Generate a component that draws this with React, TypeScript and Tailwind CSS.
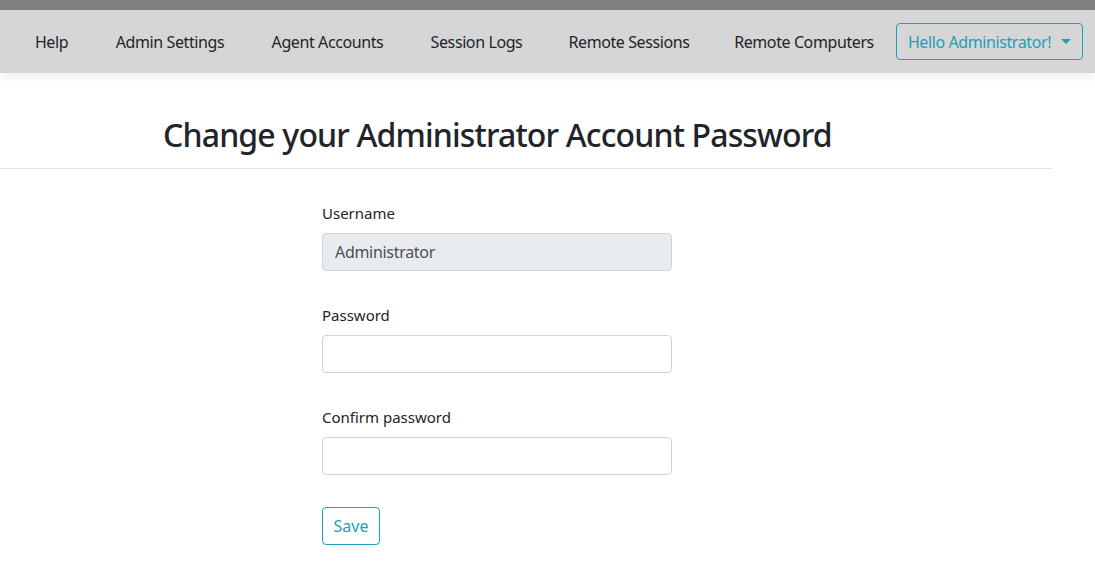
import React from "react";

const navLinks = [
  { name: "Help", w: "w-[81px]" },
  { name: "Admin Settings", w: "w-[156px]" },
  { name: "Agent Accounts", w: "w-[159px]" },
  { name: "Session Logs", w: "w-[139px]" },
  { name: "Remote Sessions", w: "w-[166px]" },
  { name: "Remote Computers", w: "w-[184px]" },
];

const fields = [
  { label: "Username", value: "Administrator", disabled: true },
  { label: "Password", value: "", disabled: false },
  { label: "Confirm password", value: "", disabled: false },
];

const App = () => {
  return (
    <div
      className="min-h-[588px] bg-white text-[#212529]"
      style={{ fontFamily: '"Segoe UI", "Noto Sans", sans-serif' }}
    >
      {/* top strip */}
      <div className="h-[10px] bg-[#808080]" />

      {/* Nav */}
      <nav className="flex h-[63px] items-center bg-[#d6d6d6] pl-[11px] pr-[12px] shadow-[0_4px_10px_rgba(0,0,0,0.06)]">
        <ul className="flex items-center">
          {navLinks.map((link) => (
            <li
              key={link.name}
              className={`${link.w} whitespace-nowrap text-center text-[16px] tracking-[-0.4px] text-[#212529]`}
            >
              {link.name}
            </li>
          ))}
        </ul>
        <button className="ml-auto flex h-[37px] w-[187px] items-center justify-center gap-[10px] whitespace-nowrap rounded-[4px] border border-[#17a2b8] text-[16px] tracking-[-0.4px] text-[#17a2b8]">
          Hello Administrator!
          <span className="h-0 w-0 border-x-[5px] border-t-[5px] border-x-transparent border-t-[#17a2b8]" />
        </button>
      </nav>

      {/* Heading */}
      <div className="pl-[163px] pt-[43px] pb-[14px]">
        <h1 className="whitespace-nowrap text-[32px] font-medium leading-[1.2] tracking-[-0.85px]">
          Change your Administrator Account Password
        </h1>
      </div>
      <hr className="w-[1052px] border-t border-[#e1e1e1]" />

      {/* Form */}
      <form className="ml-[322px] w-[350px] pt-[32px]">
        {fields.map((f) => (
          <div key={f.label} className="mb-[32px]">
            <label className="mb-[8px] block text-[15px] leading-[24px]">
              {f.label}
            </label>
            <input
              type={f.label === "Username" ? "text" : "password"}
              defaultValue={f.value}
              disabled={f.disabled}
              className={
                "block h-[38px] w-[350px] rounded-[4px] border border-[#ced4da] px-[12px] text-[16px] tracking-[-0.3px] text-[#495057] " +
                (f.disabled ? "bg-[#e9ecef]" : "bg-white")
              }
            />
          </div>
        ))}
        <button
          type="button"
          className="h-[38px] w-[58px] rounded-[4px] border border-[#17a2b8] text-[16px] text-[#17a2b8]"
        >
          Save
        </button>
      </form>
    </div>
  );
};

export default App;
